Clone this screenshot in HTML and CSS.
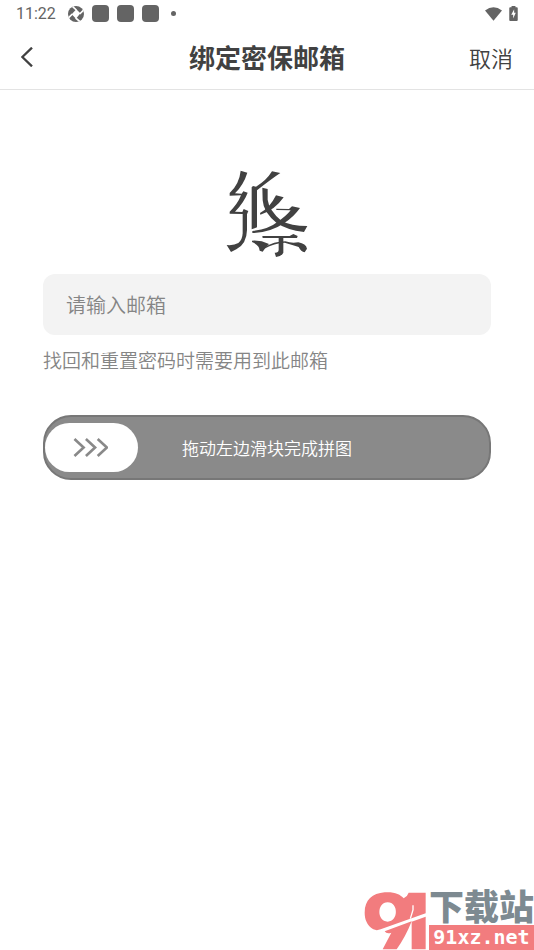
FILE: index.html
```html
<!DOCTYPE html>
<html lang="zh-CN">
<head>
<meta charset="utf-8">
<meta name="viewport" content="width=device-width, initial-scale=1">
<title>绑定密保邮箱</title>
<link rel="stylesheet" href="styles.css">
</head>
<body>
<div class="status">
  <span class="time">11:22</span>
  <svg class="shutter" viewBox="0 0 48 48" aria-hidden="true">
    <circle cx="24" cy="24" r="24" fill="#646464"/>
    <path d="M25 10 37 22 24 38 11 25Z" fill="#fff"/>
    <path d="M14 2 25 12M46 13 35 24M35 46 23 36M2 35 13 24" stroke="#fff" stroke-width="5"/>
  </svg>
  <span class="app"></span><span class="app"></span><span class="app"></span>
  <span class="dot"></span>
  <svg class="wifi" viewBox="0 0 52 42" aria-hidden="true"><path d="M0 10Q26-9 52 10L26 42Z" fill="#646464"/></svg>
  <svg class="battery" viewBox="0 0 26 46" aria-hidden="true"><path d="M7 0H19V4H23Q26 4 26 7V43Q26 46 23 46H3Q0 46 0 43V7Q0 4 3 4H7Z" fill="#646464"/><path d="M15 10 6 27H12V38L20 21H15Z" fill="#fff"/></svg>
</div>
<header class="header">
  <button class="back" type="button" aria-label="返回"><svg viewBox="0 0 36 60" aria-hidden="true"><path d="M33 2 4 30 33 58" fill="none" stroke="#414141" stroke-width="7"/></svg></button>
  <h1>绑定密保邮箱</h1>
  <button class="cancel" type="button">取消</button>
</header>
<main class="content">
  <svg class="mark" viewBox="0 0 300 315" aria-hidden="true" fill="#414141">
    <path d="M71 32 91 38Q80 74 54 100L74 101 79 94 92 98Q82 126 54 155L76 156 80 147 94 153 90 163V210Q89 252 58 268L42 276 29 255Q51 257 64 249Q76 240 77 220V162L38 161V155Q62 132 72 106L38 107V99Q67 72 71 32Z"/>
    <path d="M165 34 190 39Q164 56 120 91V202L104 208V82L108 78 117 80Q148 62 165 34Z"/>
    <path d="M136 83 152 87V119Q156 151 193 182Q222 198 271 198L261 216Q210 210 179 189Q139 157 137 121Z"/>
    <path d="M177 106 200 112Q173 151 130 164L129 159Q159 143 177 106Z"/>
    <path d="M178 146 216 147 225 139 249 144Q231 170 202 189Q162 217 106 219V213Q156 207 181 186Q208 168 221 151L178 150Z"/>
    <path d="M136 228H218L229 222 242 228 240 234H199V278Q194 289 177 291L173 278Q184 279 185 270V234H137Z"/>
    <path d="M105 242Q131 240 156 252Q146 262 137 275L128 272Q128 256 105 246Z"/>
    <path d="M142 262Q170 244 205 244Q224 251 244 247Q267 251 270 266L263 277Q252 275 245 261Q224 254 203 248Q172 249 142 266Z"/>
  </svg>
  <input class="email" id="email" type="email" placeholder="请输入邮箱">
  <label class="hint" for="email">找回和重置密码时需要用到此邮箱</label>
  <div class="slider">
    <label class="caption" for="drag">拖动左边滑块完成拼图</label>
    <input class="range" id="drag" type="range" min="0" max="100" value="0">
    <svg class="arrows" viewBox="0 0 106 58" aria-hidden="true"><path d="M4 3 32 29 4 55M39 3 67 29 39 55M75 3 103 29 75 55" fill="none" stroke="#898989" stroke-width="8"/></svg>
  </div>
</main>
<div class="watermark">
  <svg class="ninety" viewBox="0 0 186 180" aria-hidden="true">
    <path fill="#f27c7e" fill-rule="evenodd" d="M62 7C91 5 109 13 119 25Q130 20 134 8H185V70L50 118Q38 123 28 118C8 105 2 87 2 68C2 30 25 10 62 7ZM71 37C38 37 38 95 71 95C104 95 104 37 71 37Z"/>
    <path fill="#f27c7e" d="M62 124 143 94Q125 140 98 178H56L82 128Q68 133 62 124ZM143 95 185 80V178H143Z"/>
    <path d="M147 46V60L139 86" fill="none" stroke="#fff" stroke-width="4"/>
  </svg>
  <div class="site"><span class="name">下载站</span><span class="domain">91xz.net</span></div>
</div>
</body>
</html>
```

FILE: styles.css
```css
* { box-sizing: border-box; }
body {
  margin: 0;
  min-height: 100vh;
  background: #fff;
  color: #414141;
  font-family: "Noto Sans CJK SC", sans-serif;
}
button { padding: 0; border: 0; background: none; color: inherit; font: inherit; }
.status {
  display: flex;
  align-items: center;
  height: 27px;
  padding: 0 16px;
}
.time { width: 52px; color: #646464; font: 16px/20px Roboto, sans-serif; }
.shutter { width: 16px; height: 16px; margin-right: 8px; }
.app { width: 17px; height: 17px; margin-right: 8px; border-radius: 4px; background: #646464; }
.dot { width: 5px; height: 5px; margin-left: 4px; border-radius: 50%; background: #646464; }
.wifi { width: 17px; height: 14px; margin-left: auto; margin-right: 7px; }
.battery { width: 9px; height: 15px; }
.header {
  display: grid;
  grid-template-columns: 1fr auto 1fr;
  align-items: center;
  height: 63px;
  padding: 0 21px 3px;
  border-bottom: 1px solid #e3e3e3;
}
.back { justify-self: start; width: 24px; height: 32px; }
.back svg { display: block; width: 12px; height: 20px; }
h1 { margin: 0; font-size: 26px; line-height: 36px; font-weight: 700; }
.cancel { justify-self: end; font-size: 22px; line-height: 32px; font-weight: 350; }
.content { display: flex; flex-direction: column; padding: 70px 43px 0; }
.mark { align-self: center; width: 100px; height: 105px; }
.email {
  width: 100%;
  height: 61px;
  margin-top: 9px;
  padding: 0 23px;
  border: 0;
  border-radius: 12px;
  background: #f3f3f3;
  color: #414141;
  font: 350 20px/28px "Noto Sans CJK SC", sans-serif;
}
.email::placeholder { color: #858585; opacity: 1; }
.hint { margin-top: 11px; color: #858585; font-size: 19px; line-height: 28px; font-weight: 350; white-space: nowrap; }
.slider {
  position: relative;
  display: flex;
  align-items: center;
  justify-content: center;
  height: 65px;
  margin-top: 41px;
  border: 2px solid #777;
  border-radius: 28px;
  background: #8a8a8a;
}
.caption { color: #fff; font-size: 17px; line-height: 24px; font-weight: 350; }
.range {
  position: absolute;
  inset: 0;
  width: 100%;
  height: 100%;
  margin: 0;
  appearance: none;
  background: transparent;
}
.range::-webkit-slider-thumb {
  appearance: none;
  width: 93px;
  height: 49px;
  border-radius: 25px;
  background: #fff;
}
.arrows { position: absolute; left: 28px; width: 35px; height: 19px; pointer-events: none; }
.watermark { position: absolute; right: 0; bottom: 0; display: flex; align-items: flex-end; }
.ninety { width: 62px; height: 60px; margin-right: 3px; }
.site { display: flex; flex-direction: column; width: 105px; }
.name { padding-bottom: 3px; color: #7d8a91; font-size: 35px; line-height: 34px; font-weight: 900; }
.domain {
  height: 25px;
  background: #f27c7e;
  color: #fff;
  font: bold 20px/25px "DejaVu Sans Mono", monospace;
  text-align: center;
}
```
